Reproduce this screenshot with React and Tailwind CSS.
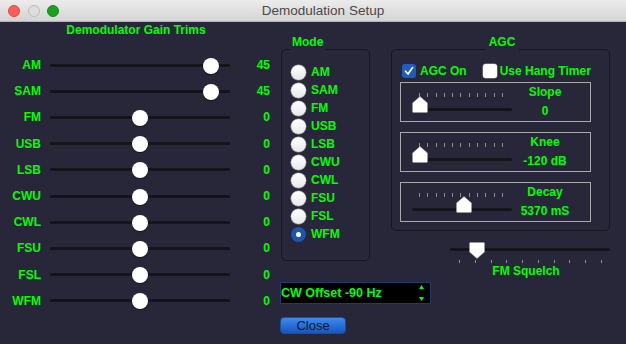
import React from "react";

const trims = [
  ["AM", 45],
  ["SAM", 45],
  ["FM", 0],
  ["USB", 0],
  ["LSB", 0],
  ["CWU", 0],
  ["CWL", 0],
  ["FSU", 0],
  ["FSL", 0],
  ["WFM", 0],
];

const modes = ["AM", "SAM", "FM", "USB", "LSB", "CWU", "CWL", "FSU", "FSL", "WFM"];

const agcSliders = [
  { label: "Slope", value: "0", pos: 0 },
  { label: "Knee", value: "-120 dB", pos: 0 },
  { label: "Decay", value: "5370 mS", pos: 44 },
];

// pointed slider thumb, up or down
const PointThumb = ({ down }) => (
  <svg width="16" height="17" viewBox="0 0 16 17">
    <path
      d={
        down
          ? "M8 16.5 L15.5 10 V1.5 Q15.5 0.5 14.5 0.5 H1.5 Q0.5 0.5 0.5 1.5 V10 Z"
          : "M8 0.5 L15.5 7 V15.5 Q15.5 16.5 14.5 16.5 H1.5 Q0.5 16.5 0.5 15.5 V7 Z"
      }
      fill="#ffffff"
      stroke="#9a9a9a"
      strokeWidth="0.6"
    />
  </svg>
);

const Ticks = ({ count, className }) => (
  <div className={`flex justify-between ${className}`}>
    {Array.from({ length: count }).map((_, i) => (
      <div key={i} className="w-px h-full bg-[#8c8c8c]" />
    ))}
  </div>
);

const TrimRow = ({ label, value }) => {
  const center = 90 + value * 1.578;
  return (
    <div className="flex items-center h-[26.2px]">
      <div className="w-[41px] text-right">{label}</div>
      <div className="relative ml-[9px] w-[180px] h-[3px] rounded-full bg-[#14141d]">
        <div
          className="absolute top-[-6px] w-[16px] h-[16px] rounded-full bg-white shadow-[0_1px_1px_rgba(0,0,0,0.5)]"
          style={{ left: center - 8 }}
        />
      </div>
      <div className="w-[40px] text-right">{value}</div>
    </div>
  );
};

const Radio = ({ label, checked }) => (
  <div className="flex items-center h-[18px]">
    {checked ? (
      <div className="w-[15px] h-[15px] rounded-full bg-[#1a55b0] flex items-center justify-center">
        <div className="w-[5px] h-[5px] rounded-full bg-white" />
      </div>
    ) : (
      <div className="w-[15px] h-[15px] rounded-full bg-gradient-to-b from-white to-[#e8e8e8] shadow-[0_0_0_0.5px_#9a9a9a]" />
    )}
    <span className="ml-[5px]">{label}</span>
  </div>
);

const AgcSlider = ({ label, value, pos }) => (
  <div className="flex w-[191px] h-[40px] border border-[#a9a9a9]">
    <div className="ml-[11px] w-[100px] pt-[10px]">
      <Ticks count={11} className="ml-[7px] w-[84px] h-[4px]" />
      <div className="relative mt-[11px] h-[3px] rounded-full bg-[#14141d]">
        <div className="absolute top-[-12px]" style={{ left: pos }}>
          <PointThumb />
        </div>
      </div>
    </div>
    <div className="w-[66px] pt-[2px] text-center leading-[14px]">
      <div>{label}</div>
      <div className="mt-[5px]">{value}</div>
    </div>
  </div>
);

export default function App() {
  return (
    <div className="w-[626px] h-[344px] bg-[#272739] font-['Liberation_Sans',Arial,sans-serif] text-[12px] font-bold text-[#00ff00] leading-[14px] overflow-hidden">
      {/* title bar */}
      <div className="flex items-center h-[22px] border-b border-[#b3b3b3] bg-gradient-to-b from-[#ececec] to-[#d4d4d4]">
        <div className="flex items-center gap-[7.5px] pl-[8px] w-[66px]">
          <div className="w-[12px] h-[12px] rounded-full bg-[#fc5f57] border border-[#df4744]" />
          <div className="w-[12px] h-[12px] rounded-full bg-[#dedede] border border-[#bcbcbc]" />
          <div className="w-[12px] h-[12px] rounded-full bg-[#1ba11f] border border-[#17891a]" />
        </div>
        <div className="flex-1 pr-[46px] text-center text-[13.5px] font-normal text-[#4a4a4a]">
          Demodulation Setup
        </div>
      </div>

      <div className="flex">
        {/* gain trims */}
        <div className="w-[280px] pt-[1px]">
          <div className="w-[272px] text-center">Demodulator Gain Trims</div>
          <div className="mt-[15px]">
            {trims.map(([l, v]) => (
              <TrimRow key={l} label={l} value={v} />
            ))}
          </div>
        </div>

        <div className="w-[346px] pt-[27px] flex flex-col">
          <div className="flex items-start">
            {/* mode */}
            <div className="relative ml-[1px] w-[89px] h-[212px] border border-[#15151f] rounded-[5px] pt-[13px] pl-[9px]">
              <div className="absolute left-[8px] top-[-15px] px-[2px] pb-[2px] bg-[#272739]">Mode</div>
              {modes.map((m) => (
                <Radio key={m} label={m} checked={m === "WFM"} />
              ))}
            </div>

            {/* agc */}
            <div className="ml-[21px] w-[219px]">
              <div className="relative h-[182px] border border-[#15151f] rounded-[5px] pt-[14px]">
                <div className="absolute left-1/2 -translate-x-1/2 ml-[1.5px] top-[-15px] px-[3px] pb-[2px] bg-[#272739]">
                  AGC
                </div>
                <div className="flex items-center pl-[10px] h-[14px]">
                  <div className="w-[14px] h-[14px] rounded-[3px] bg-[#1f5cc0] flex items-center justify-center">
                    <svg width="12" height="12" viewBox="0 0 12 12">
                      <path d="M2.5 6.2 L5 9 L9.6 2.6" fill="none" stroke="#fff" strokeWidth="1.7" strokeLinecap="round" strokeLinejoin="round" />
                    </svg>
                  </div>
                  <span className="ml-[4px]">AGC On</span>
                  <div className="ml-[16px] w-[14px] h-[14px] rounded-[3px] bg-white shadow-[0_0_0_0.5px_#9a9a9a]" />
                  <span className="ml-[3px]">Use Hang Timer</span>
                </div>
                <div className="ml-[8px] mt-[4px] flex flex-col gap-[10px]">
                  {agcSliders.map((s) => (
                    <AgcSlider key={s.label} {...s} />
                  ))}
                </div>
              </div>

              {/* fm squelch */}
              <div className="ml-[59px] w-[160px]">
                <div className="relative mt-[17px] h-[3px] rounded-full bg-[#14141d]">
                  <div className="absolute top-[-6px] left-[19px]">
                    <PointThumb down />
                  </div>
                </div>
                <Ticks count={10} className="ml-[9px] mt-[9px] w-[143px] h-[3px]" />
                <div className="mt-[1px] w-[152px] text-center">FM Squelch</div>
              </div>
            </div>
          </div>

          {/* cw offset */}
          <div className="mt-[4px] w-[151px] h-[22px] bg-black border border-[#1c3a6b] flex items-center text-[12.5px]">
            <span className="flex-1">CW Offset -90 Hz</span>
            <div className="flex flex-col gap-[8px] mr-[6px]">
              <svg width="5" height="4" viewBox="0 0 5 4">
                <path d="M2.5 0 L5 4 H0 Z" fill="#00ff00" />
              </svg>
              <svg width="5" height="4" viewBox="0 0 5 4">
                <path d="M0 0 H5 L2.5 4 Z" fill="#00ff00" />
              </svg>
            </div>
          </div>

          <div className="mt-[13px] w-[66px] h-[17px] rounded-[4px] border border-[#1a4e9e] bg-gradient-to-b from-[#3e8aee] to-[#1656bd] flex items-center justify-center text-[13px] font-normal text-[#111a2a]">
            Close
          </div>
        </div>
      </div>
    </div>
  );
}
